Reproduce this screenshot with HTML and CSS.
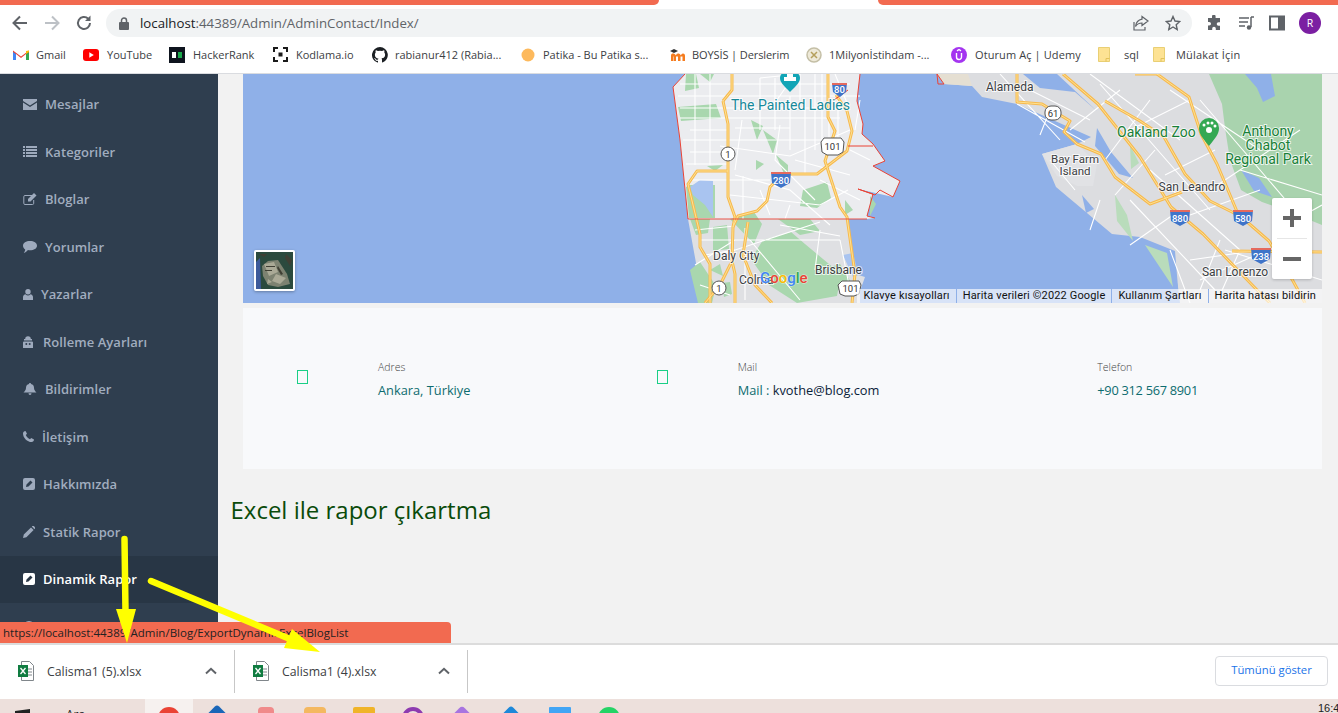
FILE: index.html
```html
<!DOCTYPE html>
<html lang="tr">
<head>
<meta charset="utf-8">
<title>AdminContact</title>
<link rel="stylesheet" href="styles.css">
</head>
<body>
<div class="window">
  <div class="tabstrip"><div class="tab-left"></div><div class="tab-active"></div><div class="tab-right"></div></div>

  <div class="toolbar">
    <svg class="tool" width="18" height="18" viewBox="0 0 18 18"><path d="M16 9H3M9 2.500 2.500 9 9 15.500" fill="none" stroke="#5f6368" stroke-width="2"/></svg>
    <svg class="tool" width="18" height="18" viewBox="0 0 18 18"><path d="M2 9h13M9 2.500 15.500 9 9 15.500" fill="none" stroke="#bdc1c6" stroke-width="2"/></svg>
    <svg class="tool" width="18" height="18" viewBox="0 0 18 18"><path d="M15 9a6 6 0 1 1-1.800-4.300" fill="none" stroke="#5f6368" stroke-width="2"/><path d="M15.500 1.500v5.500H10z" fill="#5f6368"/></svg>
    <div class="omnibox">
      <svg width="10" height="13" viewBox="0 0 10 13"><path d="M2.500 6V3.500a2.500 2.500 0 0 1 5 0V6" fill="none" stroke="#5f6368" stroke-width="1.500"/><rect y="5" width="10" height="8" rx="1" fill="#5f6368"/></svg>
      <span class="url"><span class="url-host">localhost</span>:44389/Admin/AdminContact/Index/</span>
      <span class="omni-spacer"></span>
      <svg width="16" height="16" viewBox="0 0 16 16"><path d="M9 1.500 15 6l-6 4.500V8C6 8 4 9 2.500 11.500 3 7.500 5.500 4.800 9 4.200zM1 7v8h11v-3" fill="none" stroke="#5f6368" stroke-width="1.200"/></svg>
      <svg width="16" height="16" viewBox="0 0 16 16"><path d="m8 1.500 2 4.500 4.800.5-3.600 3.200 1 4.800L8 12l-4.200 2.500 1-4.800L1.200 6.500 6 6z" fill="none" stroke="#5f6368" stroke-width="1.400"/></svg>
    </div>
    <svg class="ext" width="16" height="16" viewBox="0 0 16 16"><path d="M6 1.500a1.800 1.800 0 0 1 3.600 0V3H14v4.200h-1.500a1.800 1.800 0 0 0 0 3.600H14V15H9.800v-1.500a1.800 1.800 0 0 0-3.600 0V15H2v-4.500h1.200a1.800 1.800 0 0 0 0-3.600H2V3h4z" fill="#5f6368"/></svg>
    <svg class="ext" width="16" height="16" viewBox="0 0 16 16"><path d="M1 3h10M1 7h9M1 11h6M13 2v10" fill="none" stroke="#5f6368" stroke-width="1.500"/><circle cx="11" cy="12.500" r="2.200" fill="#5f6368"/><path d="M13 2h3" stroke="#5f6368" stroke-width="1.500"/></svg>
    <svg class="ext" width="16" height="16" viewBox="0 0 16 16"><path d="M1 1.500h14v13H1zM10 1.500v13" fill="none" stroke="#5f6368" stroke-width="2"/><rect x="10" y="2" width="5" height="12" fill="#5f6368"/></svg>
    <div class="avatar">R</div>
  </div>

  <div class="bookmarks">
    <a class="bm bm-gmail"><svg width="16" height="12" viewBox="0 0 16 12"><path d="M0 1.500 8 7.500l8-6V11h-3V5L8 9 3 5v6H0z" fill="#ea4335"/><path d="M0 3v8h3V5z" fill="#4285f4"/><path d="M16 3v8h-3V5z" fill="#34a853"/><path d="M13 2v3l3-2V1.500z" fill="#fbbc04"/></svg>Gmail</a>
    <a class="bm bm-yt"><svg width="16" height="12" viewBox="0 0 16 12"><rect width="16" height="12" rx="3" fill="#f00"/><path d="m6.300 3.300 4.500 2.700-4.500 2.700z" fill="#fff"/></svg>YouTube</a>
    <a class="bm bm-hr"><svg width="16" height="16" viewBox="0 0 16 16"><rect width="16" height="16" fill="#0e141e"/><rect x="3" y="5" width="4" height="6" fill="#fff"/><rect x="9" y="5" width="4" height="6" fill="#1ba94c"/></svg>HackerRank</a>
    <a class="bm bm-kod"><svg width="15" height="15" viewBox="0 0 15 15"><path d="M1 5V1h4M10 1h4v4M14 10v4h-4M5 14H1v-4" fill="none" stroke="#1a1a1a" stroke-width="2"/><rect x="5.500" y="5.500" width="4" height="4" fill="#1a1a1a"/></svg>Kodlama.io</a>
    <a class="bm bm-gh"><svg width="16" height="16" viewBox="0 0 16 16"><path d="M8 0a8 8 0 0 0-2.500 15.600c.4.100.5-.2.500-.4v-1.400c-2.200.5-2.700-1-2.700-1-.4-.9-.9-1.200-.9-1.200-.7-.5.100-.5.100-.5.800.100 1.200.8 1.200.8.700 1.200 1.900.9 2.300.7.100-.5.300-.9.500-1.100-1.800-.2-3.600-.9-3.600-4 0-.9.300-1.600.8-2.100-.1-.2-.4-1 .1-2.100 0 0 .7-.2 2.200.8a7.600 7.600 0 0 1 4 0c1.500-1 2.200-.8 2.200-.8.400 1.100.2 1.900.1 2.100.5.600.8 1.300.8 2.100 0 3.100-1.900 3.700-3.600 3.900.3.300.5.700.5 1.500v2.200c0 .2.100.5.600.4A8 8 0 0 0 8 0z" fill="#1b1f23"/></svg>rabianur412 (Rabia...</a>
    <a class="bm bm-pat"><svg width="14" height="14" viewBox="0 0 14 14"><circle cx="7" cy="7" r="6.500" fill="#fdb95c"/></svg>Patika - Bu Patika s...</a>
    <a class="bm bm-boy"><svg width="16" height="14" viewBox="0 0 16 14"><path d="M1 13V7.500C1 6 2 5.500 3 5.500S5 6 5.500 7 6.500 5.500 8 5.500 10 6 10.500 7 11.500 5.500 13 5.500s2 1 2 2.500v5h-2.500V8.500h-2V13H8V8.500H6V13H3.500V8.500H3V13z" fill="#f57c1f"/><path d="M0 3 4 1l4 2-4 2z" fill="#333"/></svg>BOYSİS | Derslerim</a>
    <a class="bm bm-mil"><svg width="16" height="16" viewBox="0 0 16 16"><circle cx="8" cy="8" r="7" fill="#eee9d8" stroke="#c4bfa6" stroke-width="1.500"/><path d="m5 5 6 6M11 5l-6 6" stroke="#b59f5c" stroke-width="1.500"/></svg>1Milyonİstihdam -...</a>
    <a class="bm bm-ude"><svg width="16" height="16" viewBox="0 0 16 16"><circle cx="8" cy="8" r="8" fill="#a435f0"/><path d="M5.500 6v4a2.500 2.500 0 0 0 5 0V6M6 3.800 8 2.500l2 1.300" fill="none" stroke="#fff" stroke-width="1.400"/></svg>Oturum Aç | Udemy</a>
    <a class="bm bm-sql"><svg width="12" height="15" viewBox="0 0 12 15"><path d="M.5.500h11v14H.5z" fill="#fde293" stroke="#e9cf74"/><path d="M8 14.500v-3h3.500" fill="none" stroke="#e3c25a"/></svg>sql</a>
    <a class="bm bm-mul"><svg width="12" height="15" viewBox="0 0 12 15"><path d="M.5.500h11v14H.5z" fill="#fde293" stroke="#e9cf74"/><path d="M8 14.500v-3h3.500" fill="none" stroke="#e3c25a"/></svg>Mülakat İçin</a>
  </div>

  <div class="main">
    <nav class="sidebar">
      <a class="nav-item"><svg class="ico" width="14" height="11" viewBox="0 0 14 11"><path d="M0 0h14v2L7 6.500 0 2zM0 3.500 7 8l7-4.500V11H0z"/></svg>Mesajlar</a>
      <a class="nav-item"><svg class="ico" width="14" height="11" viewBox="0 0 14 11"><path d="M0 0h2v2H0zM3 0h11v2H3zM0 3h2v2H0zM3 3h11v2H3zM0 6h2v2H0zM3 6h11v2H3zM0 9h2v2H0zM3 9h11v2H3z"/></svg>Kategoriler</a>
      <a class="nav-item"><svg class="ico" width="14" height="12" viewBox="0 0 14 12"><path d="M9 2.500H2a1.200 1.200 0 0 0-1.200 1.200v6.600A1.200 1.200 0 0 0 2 11.500h7.500a1.200 1.200 0 0 0 1.200-1.200V7" fill="none" stroke="#9eaabd"/><path d="M5 6 11 0l2.500 2.500-6 6H5z"/></svg>Bloglar</a>
      <a class="nav-item"><svg class="ico" width="14" height="12" viewBox="0 0 14 12"><path d="M7 0c3.900 0 7 2 7 4.700S10.900 9.300 7 9.300c-.7 0-1.300 0-2-.2C4 10.200 2.500 11.500.800 12c.8-1 1.300-2.200 1.400-3.500C.800 7.600 0 6.200 0 4.700 0 2 3.100 0 7 0z"/></svg>Yorumlar</a>
      <a class="nav-item"><svg class="ico" width="10" height="11" viewBox="0 0 10 11"><circle cx="5" cy="2.700" r="2.700"/><path d="M0 11V8.200C0 6.500 1.200 5.500 2.500 5.200a3.500 3.500 0 0 0 5 0C8.800 5.500 10 6.500 10 8.200V11z"/></svg>Yazarlar</a>
      <a class="nav-item"><svg class="ico" width="12" height="12" viewBox="0 0 12 12"><path d="M2.200 3a2.800 2.800 0 0 1 5.600 0H9v1.500H1V3zM1 5.500h8a1 1 0 0 1 1 1V12H0V6.500a1 1 0 0 1 1-1z"/><circle cx="3.300" cy="8" r="1" fill="#2f3e4f"/><circle cx="6.700" cy="8" r="1" fill="#2f3e4f"/></svg>Rolleme Ayarları</a>
      <a class="nav-item"><svg class="ico" width="14" height="12" viewBox="0 0 14 12"><path d="M7 0c.6 0 1 .4 1 1 2 .4 3 2 3 3.800 0 2 1 3.400 2.500 4.700H.500C2 8.200 3 6.800 3 4.800 3 3 4 1.400 6 1c0-.6.400-1 1-1zM5.500 10.300h3a1.500 1.700 0 0 1-3 0z"/></svg>Bildirimler</a>
      <a class="nav-item"><svg class="ico" width="11" height="11" viewBox="0 0 11 11"><path d="M2.500 0 4 2.800 2.800 4c.6 1.700 2.500 3.600 4.200 4.200L8.200 7 11 8.500c0 1.400-1 2.500-2.400 2.500C4.300 11 0 6.700 0 2.400 0 1 1.100 0 2.500 0z"/></svg>İletişim</a>
      <a class="nav-item"><svg class="ico" width="12" height="12" viewBox="0 0 12 12"><path fill-rule="evenodd" d="M2 0h8a2 2 0 0 1 2 2v8a2 2 0 0 1-2 2H2a2 2 0 0 1-2-2V2a2 2 0 0 1 2-2zm5.500 2.500-4 4L3 9l2.500-.5 4-4z"/></svg>Hakkımızda</a>
      <a class="nav-item"><svg class="ico" width="12" height="12" viewBox="0 0 12 12"><path d="M0 12l.8-3.400L8 1.400 10.600 4 3.400 11.200zM8.800.6 9.400 0a1 1 0 0 1 1.400 0L12 1.200a1 1 0 0 1 0 1.400l-.6.600z"/></svg>Statik Rapor</a>
      <a class="nav-item nav-active"><svg class="ico" width="12" height="12" viewBox="0 0 12 12"><path fill-rule="evenodd" d="M2 0h8a2 2 0 0 1 2 2v8a2 2 0 0 1-2 2H2a2 2 0 0 1-2-2V2a2 2 0 0 1 2-2zm5.500 2.500-4 4L3 9l2.500-.5 4-4z"/></svg>Dinamik Rapor</a>
      <a class="nav-item"><svg class="ico" width="12" height="12" viewBox="0 0 12 12"><circle cx="6" cy="6" r="6"/></svg>Ayarlar</a>
    </nav>

    <section class="content">
      <div class="map">
        <svg class="map-svg" width="1079" height="229" viewBox="243 74 1079 229">
          <defs>
            <g id="hwp">
              <path d="M723 101 728 124V197L735 217 733 227 732 261 735 274 735 303"/>
              <path d="M780 177 770 187 767 201 757 211 738 216 733 227"/>
              <path d="M828 74 828 117 835 131 825 161 840 207 847 217 855 274 852 303"/>
              <path d="M790 174H817L847 151 852 131 847 111 836 95"/>
              <path d="M728 171H697L688 184 700 234 700 247 710 264 710 303"/>
              <path d="M748 222 743 255 755 285 772 303"/>
              <path d="M732 261 720 285 705 303"/>
              <path d="M732 74V90L723 101"/>
              <path d="M1063 74 1098 104 1140 157 1171 207 1203 234 1258 291 1270 303"/>
              <path d="M1157 74 1189 97 1201 134 1217 164 1238 214 1269 241 1293 281 1305 303"/>
              <path d="M1232 251 1322 252"/>
              <path d="M1017 74V102L1042 104 1070 121 1064 132 1077 144 1101 154 1115 177 1150 204 1182 192"/>
              <path d="M1105 101 1140 121 1164 137 1185 174 1210 201 1240 216"/>
              <path d="M1135 74H1160"/>
            </g>
          </defs>
          <rect x="243" y="74" width="1079" height="229" fill="#8fb0e8"/>
          <!-- peninsula -->
          <path d="M685 74 673 87 680 140 688 219 698 274 700 303H860V291L865 277 855 274 847 219H688z" fill="#dfe0e3"/>
          <path d="M685 74 673 87 680 140 688 219H867L875 218 867 216 873 194 858 189 893 197 900 181 873 166 885 161 873 144 862 134 863 124 857 101 860 74z" fill="#ebecef"/>
          <!-- east bay -->
          <path d="M937 74 944 84 972 86 982 97 1017 104 1091 137 1077 144 1042 154 1056 187 1112 234 1140 237 1175 251 1178 287 1180 303H1322V74z" fill="#dcdde0"/>
          <path d="M937 74 944 84 972 86 968 74z" fill="#e5dfd2"/>
          <path d="M1023 74 1040 88 1075 92 1098 112 1057 74zM1097 128l14 24 22 26-14-4-24-28zM1157 282l15-20 6 25-4 16h-17z" fill="#8fb0e8"/>
          <path d="M1209 74 1222 104 1225 128 1230 160 1241 190 1262 202 1290 212 1322 225V74z" fill="#a9d3ae"/>
          <path d="M1245 74l12 14 6 14 12-6-4-22zM1241 170l18 8 13 19-18-6z" fill="#8fb0e8"/>
          <path d="M1130 145l9 18-8 6zM1115 195l12 20 6 26-16-20zM1145 245l22 8 6 34z" fill="#b9dcbb"/>
          <path d="M1042 154l35-10 20 20-4 22-16 0-20-10z" fill="#e1e2e5"/>
          <path d="M1082 195l12 14-8 4z" fill="#8fb0e8"/>
          <!-- parks -->
          <path d="M678 107l38-3 5 14-40 3zM686 74l10 0 3 14-14 3zM700 74l14 0-4 8zM751 120l12 6-6 14zM763 130l14 10-4 14zM756 160l8 4-8 6zM776 155l12 10 0 18zM707 166l16-1-8 6zM686 187l4-2 25 0 0 33-26 0zM803 190l24-8 4 16-14 10-17-2zM845 200l8 10-8 5zM870 196l6 8-6 12zM690 219l20 0-2 14-12 2zM713 227l14-2 2 24-16 2zM730 219l24-7 8 12-8 20zM690 270l10-8 16 24-4 17h-14zM710 270l10-6 3 12zM763 240l28-8 14 12 36 30-4 22-40 7-28-18-18-26zM778 219l32 0 10 12-20 4zM722 283l8-1 2 12-8 3zM820 270l20-6 12 20-18 8z" fill="#a9d7ae"/>
          <path d="M690 187l10-7 13 1 0 36-8-12-12-10zM843 255l10-2 6 22-6 2z" fill="#a9c4f0"/>
          <!-- white streets -->
          <g class="streets">
            <path d="M678 96H860M680 118H840M683 140H830M720 146 790 156 850 130M686 164H728M690 180H770M730 195 820 205 848 190M770 110 795 74M835 74 850 110M780 125 775 160 815 200M735 175 790 190 830 225M700 240H840M720 255 820 222M695 265 735 240M750 240 800 300M820 230 815 270M800 74V100M815 74V150M822 74V150M829 74V150M838 85V150"/>
            <path d="M680 84H850M680 108H850M695 74V165M710 74V165M760 78V130M775 78V130M790 96V150M742 120 735 170M743 176V219M690 130H728M735 128H790M805 100V175M690 152H725M795 160 850 175M760 190 770 215M790 205 785 219M820 180 860 200M695 230 735 226M705 255 735 250M745 228 745 300M780 225 840 236M840 240 850 290M700 285 730 295M760 78 800 74M850 150 870 160M855 130 860 100"/>
            <path d="M1000 74 1060 140M1017 104 1085 142M1100 84 1210 210M1150 100 1105 160M1150 170 1240 250M1170 90 1260 150M1180 210 1130 245M1210 190 1300 130M1225 250 1322 280M1200 100 1290 205M1130 200 1215 290M1240 170 1322 195M1170 250 1190 303M1050 160 1075 190M1100 200 1090 230"/>
            <path d="M1030 90 1090 120M1090 74 1180 140M1120 90 1070 130M1130 130 1190 100M1155 150 1115 195M1165 175 1215 150M1190 215 1260 190M1220 240 1200 290M1240 250 1220 295M1190 260 1260 250M1200 280 1290 240M1295 220 1322 205M1050 110 1040 135"/>
          </g>
          <!-- highways -->
          <use class="hw" href="#hwp"/>
          <use class="hw-in" href="#hwp"/>
          <!-- red boundary -->
          <path class="bound" d="M685 74 673 87 680 140 688 219"/>
          <path class="bound" d="M860 74 857 101 863 124 862 134 873 144 885 161 873 166 900 181 893 197 880 190 875 195 858 189 873 194 867 216 875 218"/>
          <path class="bound" d="M937 74 944 84 938 84z"/>
          <path class="bound" d="M848 146H873"/>
          <path class="bound" d="M834 100 848 90"/>
          <path d="M688 219H867" stroke="#ea4335" stroke-width="2" opacity=".45" fill="none"/>
          <!-- shields -->
          <g class="ushield"><circle cx="728" cy="154" r="7"/><circle cx="719" cy="288" r="7"/><rect x="1045" y="106" width="16" height="14" rx="6"/></g>
          <text class="sh-t" x="728" y="158">1</text>
          <text class="sh-t" x="719" y="292">1</text>
          <text class="sh-t" x="1053" y="117">61</text>
          <g class="usroad"><path d="M824 138h17l3 4-1 10-5 3h-11l-5-3-1-10z"/><path d="M842 281h17l2 4-2 9-5 2h-9l-5-2-2-9z"/></g>
          <text class="sh-t" x="832.500" y="150">101</text>
          <text class="sh-t" x="850.500" y="292">101</text>
          <g class="inter">
            <path d="M771 172h20l-1 11-9 5-9-5z"/><path d="M832 83h15l-1 9-6 5-7-5z"/><path d="M1170 210h20l-1 11-9 5-9-5z"/><path d="M1233 210h20l-1 11-9 5-9-5z"/><path d="M1251 248h20l-1 11-9 5-9-5z"/>
          </g>
          <path d="M771 172h20v2h-20zM832 83h15v2h-15zM1170 210h20v2h-20zM1233 210h20v2h-20zM1251 248h20v2h-20z" fill="#e46a5e"/>
          <text class="in-t" x="781" y="184">280</text>
          <text class="in-t" x="839.500" y="93">80</text>
          <text class="in-t" x="1180" y="222">880</text>
          <text class="in-t" x="1243" y="222">580</text>
          <text class="in-t" x="1261" y="260">238</text>
          <!-- pins -->
          <path d="M790 92c-7-7-10-10-10-14 0-2 1-4 2-4h16c1 0 2 2 2 4 0 4-3 7-10 14z" fill="#12a5b6"/>
          <path d="M787 74h6v3h3v4h-12v-4h3z" fill="#fff"/>
          <path d="M1209 146c-7-9-10-12-10-18a10 10 0 0 1 20 0c0 6-3 9-10 18z" fill="#34a853"/>
          <circle cx="1209" cy="130" r="3" fill="#fff"/><circle cx="1204" cy="125" r="1.500" fill="#fff"/><circle cx="1208" cy="123" r="1.500" fill="#fff"/><circle cx="1212" cy="123" r="1.500" fill="#fff"/><circle cx="1215" cy="126" r="1.500" fill="#fff"/>
          <!-- labels -->
          <text class="lb lb-teal" x="731" y="110">The Painted Ladies</text>
          <text class="lb lb-dark" x="986" y="91">Alameda</text>
          <text class="lb lb-green" x="1117" y="137">Oakland Zoo</text>
          <text class="lb lb-green lb-mid" x="1268" y="136">Anthony</text>
          <text class="lb lb-green lb-mid" x="1268" y="150">Chabot</text>
          <text class="lb lb-green lb-mid" x="1268" y="164">Regional Park</text>
          <text class="lb lb-dark lb-mid lb-sm" x="1075" y="163">Bay Farm</text>
          <text class="lb lb-dark lb-mid lb-sm" x="1075" y="175">Island</text>
          <text class="lb lb-dark lb-mid" x="1192" y="191">San Leandro</text>
          <text class="lb lb-dark lb-mid" x="1235" y="276">San Lorenzo</text>
          <text class="lb lb-dark" x="713" y="260">Daly City</text>
          <text class="lb lb-dark" x="739" y="284">Colma</text>
          <text class="lb lb-dark" x="815" y="274">Brisbane</text>
          <text class="google" x="760" y="283"><tspan fill="#4285f4">G</tspan><tspan fill="#ea4335">o</tspan><tspan fill="#fbbc04">o</tspan><tspan fill="#4285f4">g</tspan><tspan fill="#34a853">l</tspan><tspan fill="#ea4335">e</tspan></text>
        </svg>
        <div class="sat"><svg width="37" height="37" viewBox="0 0 37 37"><rect width="37" height="37" fill="#2b4a3e"/><path d="M0 10 4 6 5 37H0z" fill="#3d5a9a"/><path d="M6 14 12 9 22 8 31 22 34 32 22 35 12 33 7 24z" fill="#7d8271"/><path d="M8 12l10-2 4 10-9 4zM20 22l10 4-6 6-8-3zM12 27l4 3-5 2z" fill="#aaa996"/><path d="M10 14h9v1h-9zM9 18h7v1H9zM22 14l5 8-2 1-4-7zM30 2l6 6-2 6-5-8zM3 2h8l-3 3z" fill="#3f3f34"/></svg></div>
        <div class="zoom"><div class="zoom-btn">
          <svg width="18" height="18" viewBox="0 0 18 18"><path d="M7 0h4v7h7v4h-7v7H7v-7H0V7h7z" fill="#666"/></svg></div>
          <div class="zoom-sep"></div>
          <div class="zoom-btn"><svg width="18" height="4" viewBox="0 0 18 4"><rect width="18" height="4" fill="#666"/></svg></div>
        </div>
        <div class="attrib"><span>Klavye kısayolları</span><span>Harita verileri ©2022 Google</span><span>Kullanım Şartları</span><span>Harita hatası bildirin</span></div>
      </div>

      <div class="contact">
        <div class="c-col">
          <div class="c-icon"><span class="tofu"></span></div>
          <div class="c-text"><div class="c-label">Adres</div><div class="c-value">Ankara, Türkiye</div></div>
        </div>
        <div class="c-col">
          <div class="c-icon"><span class="tofu"></span></div>
          <div class="c-text"><div class="c-label">Mail</div><div class="c-value">Mail : <span class="c-mail">kvothe@blog.com</span></div></div>
        </div>
        <div class="c-col">
          <div class="c-icon"></div>
          <div class="c-text"><div class="c-label">Telefon</div><div class="c-value c-tel">+90 312 567 8901</div></div>
        </div>
      </div>

      <h2 class="report">Excel ile rapor çıkartma</h2>
    </section>
    <div class="status">https://localhost:44389/Admin/Blog/ExportDynamicExcelBlogList</div>
  </div>

  <div class="downloads">
    <div class="dl">
      <svg class="xl" width="16" height="20" viewBox="0 0 16 20"><path d="M3.500.500h8l4 4v15h-12z" fill="#fff" stroke="#80868b"/><path d="M10 11h4M10 8h4M10 14h4" stroke="#80868b"/><rect y="4" width="10" height="12" fill="#107c41"/><path d="m2.500 7 5 6m0-6-5 6" stroke="#fff" stroke-width="1.300"/></svg>
      <span class="dl-name">Calisma1 (5).xlsx</span>
      <svg class="chev" width="12" height="8" viewBox="0 0 12 8"><path d="M1 6.500 6 1.800l5 4.700" fill="none" stroke="#5f6368" stroke-width="2"/></svg>
    </div>
    <div class="dl">
      <svg class="xl" width="16" height="20" viewBox="0 0 16 20"><path d="M3.500.500h8l4 4v15h-12z" fill="#fff" stroke="#80868b"/><path d="M10 11h4M10 8h4M10 14h4" stroke="#80868b"/><rect y="4" width="10" height="12" fill="#107c41"/><path d="m2.500 7 5 6m0-6-5 6" stroke="#fff" stroke-width="1.300"/></svg>
      <span class="dl-name">Calisma1 (4).xlsx</span>
      <svg class="chev" width="12" height="8" viewBox="0 0 12 8"><path d="M1 6.500 6 1.800l5 4.700" fill="none" stroke="#5f6368" stroke-width="2"/></svg>
    </div>
    <span class="dl-spacer"></span>
    <button class="showall">Tümünü göster</button>
  </div>

  <div class="taskbar">
    <svg class="tb-win" width="16" height="4" viewBox="0 0 16 4"><path d="M1 2 16 0V4H1z" fill="#222"/></svg>
    <span class="tb-search">Ara</span>
    <div class="tb-active"><span class="dot dot-red"></span></div>
    <div class="tb-icons">
      <span class="dot dot-blue"></span><span class="dot dot-pink"></span><span class="dot dot-amber"></span><span class="dot dot-folder"></span><span class="dot dot-ring"></span><span class="dot dot-vs"></span><span class="dot dot-azure"></span><span class="dot dot-sky"></span><span class="dot dot-green"></span>
    </div>
    <span class="tb-spacer"></span>
    <span class="tb-clock">16:47</span>
  </div>

  <svg class="arrows" width="1338" height="713" viewBox="0 0 1338 713">
    <path d="M124.500 539 125.500 612" stroke="#ffff00" stroke-width="6.500" stroke-linecap="round" fill="none"/>
    <path d="M116 609H136L127 643z" fill="#ffff00"/>
    <path d="M151 581 290 639" stroke="#ffff00" stroke-width="6.500" stroke-linecap="round" fill="none"/>
    <path d="M292 629 284 648 320 652z" fill="#ffff00"/>
  </svg>
</div>
</body>
</html>
```
FILE: styles.css
```css
* { box-sizing: border-box; }
html, body { margin: 0; padding: 0; }
body { font-family: "Open Sans", "Liberation Sans", sans-serif; background: #fff; }
.window { position: relative; width: 1338px; height: 713px; overflow: hidden; display: flex; flex-direction: column; }

.tabstrip { display: flex; height: 5px; flex: none; background: #fff; }
.tab-left { width: 659px; background: #f26a50; border-bottom-right-radius: 5px; }
.tab-active { width: 219px; }
.tab-right { flex: 1; background: #f26a50; border-bottom-left-radius: 5px; }

.toolbar { display: flex; align-items: center; height: 32px; flex: none; padding: 4px 17px 0 11px; background: #fff; }
.tool { margin-right: 14px; flex: none; }
.tool:nth-child(3) { margin-right: 13px; }
.omnibox { display: flex; align-items: center; width: 1086px; height: 28px; padding: 0 11px 0 13px; background: #f1f3f4; border-radius: 14px; gap: 11px; flex: none; }
.omnibox svg:last-child { margin-left: 5px; }
.url { font-size: 13.250px; color: #5f6368; white-space: nowrap; }
.url-host { color: #202124; }
.omni-spacer { flex: 1; }
.ext { margin-left: 15.500px; flex: none; }
.omnibox + .ext { margin-left: 14px; }
.avatar { width: 22px; height: 22px; margin-left: 14px; border-radius: 50%; background: #7b1fa2; color: #fff; font-size: 10.500px; display: flex; align-items: center; justify-content: center; flex: none; }

.bookmarks { position: relative; display: flex; align-items: center; height: 37px; flex: none; background: #fff; border-bottom: 1px solid #dadce0; padding-bottom: 1px; font-size: 11px; color: #3c4043; white-space: nowrap; }
.bm { display: flex; align-items: center; flex: none; color: #3c4043; }
.bm svg { flex: none; margin-right: 7px; }
.bm-gmail { margin-left: 13px; width: 70px; }
.bm-yt { width: 86px; }
.bm-yt svg { margin-right: 8px; }
.bm-hr { width: 104px; }
.bm-hr svg { margin-right: 8px; }
.bm-kod { width: 99px; }
.bm-kod svg { margin-right: 8px; }
.bm-gh { width: 149px; }
.bm-pat { width: 149px; }
.bm-pat svg { margin-right: 8px; }
.bm-boy { width: 136px; letter-spacing: -.1px; }
.bm-boy svg { margin-right: 6px; }
.bm-mil { width: 145px; }
.bm-ude { width: 147px; letter-spacing: .1px; }
.bm-ude svg { margin-right: 8px; }
.bm-sql { width: 55px; }
.bm-sql svg { margin-right: 14px; }
.bm-mul { width: 100px; letter-spacing: .2px; }
.bm-mul svg { margin-right: 11px; }

.main { position: relative; flex: 1; display: flex; background: #f2f2f2; min-height: 0; }
.sidebar { width: 218px; flex: none; background: #2f3e4f; padding-top: 6.400px; overflow: hidden; }
.nav-item { display: flex; align-items: center; height: 47.530px; padding-left: 23px; gap: 8px; font-size: 13px; font-weight: 600; color: #a1adbf; letter-spacing: .05px; white-space: nowrap; }
.ico { fill: #9eaabd; flex: none; }
.nav-active { background: #283645; color: #fff; }
.nav-active .ico { fill: #fff; }

.content { flex: 1; min-width: 0; padding: 0 16px 0 12px; }
.map { position: relative; width: 1079px; height: 229px; margin-left: 13px; overflow: hidden; }
.map-svg { display: block; }
.streets path { fill: none; stroke: #fff; stroke-width: 1.100; }
.hw { fill: none; stroke: #f7b94e; stroke-width: 3; stroke-linejoin: round; }
.hw-in { fill: none; stroke: #fde293; stroke-width: 1; stroke-linejoin: round; }
.bound { fill: none; stroke: #ea4335; stroke-width: 1; }
.ushield circle, .ushield rect { fill: #fff; stroke: #555; stroke-width: 1; }
.usroad path { fill: #fff; stroke: #555; stroke-width: 1; }
.inter path { fill: #3f74c9; }
.sh-t { font: 9.500px Roboto, sans-serif; fill: #333; text-anchor: middle; }
.in-t { font: 500 9.500px Roboto, sans-serif; fill: #fff; text-anchor: middle; }
.lb { font-family: Roboto, sans-serif; font-size: 12px; paint-order: stroke; stroke: rgba(255,255,255,.75); stroke-width: 2px; }
.lb-sm { font-size: 11.500px; }
.lb-mid { text-anchor: middle; }
.lb-teal { fill: #16899a; font-size: 14px; }
.lb-dark { fill: #3c4043; }
.lb-green { fill: #188038; font-size: 14px; }
.google { font: 500 15px Roboto, sans-serif; paint-order: stroke; stroke: rgba(255,255,255,.6); stroke-width: 1px; }
.sat { position: absolute; left: 11px; top: 176px; width: 41px; height: 41px; border: 2px solid #fff; border-radius: 2px; box-shadow: 0 1px 3px rgba(0,0,0,.3); overflow: hidden; }
.sat svg { display: block; }
.zoom { position: absolute; right: 10px; top: 124px; width: 40px; height: 81px; background: #fff; border-radius: 2px; box-shadow: 0 1px 3px rgba(0,0,0,.2); display: flex; flex-direction: column; }
.zoom-btn { flex: 1; display: flex; align-items: center; justify-content: center; }
.zoom-sep { height: 1px; margin: 0 5px; background: #e6e6e6; }
.attrib { position: absolute; right: 0; bottom: 0; height: 14px; display: flex; font-family: Roboto, sans-serif; font-size: 11px; letter-spacing: .15px; line-height: 14px; color: #111; }
.attrib span { padding: 0 6px; background: rgba(255,255,255,.65); border-left: 1px solid #8fb0e8; white-space: nowrap; }
.attrib span:first-child { border-left: 0; }

.contact { display: grid; grid-template-columns: repeat(3, 1fr); width: 1079px; height: 161px; margin: 5px 0 0 13px; background: #f8f9fb; }
.c-col { display: flex; padding: 51px 0 0 54px; }
.c-icon { width: 81px; flex: none; padding-top: 11px; }
.tofu { display: block; width: 11px; height: 14px; border: 1px solid #19cf86; }
.c-label { font-size: 10.500px; font-weight: 300; line-height: 16px; color: #444; }
.c-value { margin-top: 6px; font-size: 12.800px; line-height: 18px; color: #0d6c6f; }
.c-tel { letter-spacing: -.28px; }
.c-mail { color: #0b2239; }

.report { margin: 24px 0 0 .5px; font-size: 24px; font-weight: 400; line-height: 34px; color: #0a4b0a; }

.status { position: absolute; left: 0; bottom: 0; width: 451px; height: 21px; padding: 2px 0 0 3px; background: #f26a50; border-top-right-radius: 4px; font-size: 11.500px; line-height: 18px; color: #222; white-space: nowrap; }

.downloads { display: flex; align-items: center; height: 56px; flex: none; background: #fff; border-top: 2px solid #dcdcdc; padding: 0 10px 2px 0; }
.dl { display: flex; align-items: center; width: 235px; height: 43px; padding-left: 18px; border-right: 1px solid #c7c7c7; flex: none; }
.dl + .dl { width: 233px; }
.xl { margin-right: 13px; flex: none; }
.dl-name { font-size: 12.300px; color: #3c4043; flex: 1; white-space: nowrap; }
.chev { margin-right: 17px; flex: none; }
.dl-spacer { flex: 1; }
.showall { width: 113px; height: 30px; background: #fff; border: 1px solid #dadce0; border-radius: 4px; font: 11.300px "Open Sans", sans-serif; color: #1a73e8; padding: 0 0 3px; }

.taskbar { display: flex; align-items: flex-start; height: 14px; flex: none; background: #ede0dc; overflow: hidden; }
.tb-win { margin: 10px 0 0 14px; flex: none; }
.tb-search { margin: 8px 0 0 36px; width: 79px; font-size: 12px; color: #222; line-height: 16px; flex: none; }
.tb-active { width: 48px; height: 14px; background: #f6f1ef; padding: 8px 0 0 13px; flex: none; }
.tb-icons { display: flex; gap: 27px; padding: 8px 0 0 13px; }
.dot { display: block; width: 22px; height: 22px; flex: none; border-radius: 50%; }
.dot-red { background: #ea4335; }
.dot-blue { background: #1a66b8; border-radius: 3px; transform: rotate(45deg); margin-top: 2px; }
.dot-pink { background: #f08a8a; width: 16px; margin: 0 3px; border-radius: 4px; }
.dot-amber { background: #f4b860; border-radius: 4px; }
.dot-folder { background: #f0b429; border-radius: 2px; }
.dot-ring { background: transparent; border: 4px solid #8e3bb0; }
.dot-vs { background: #a874e0; border-radius: 4px; transform: rotate(45deg); margin-top: 3px; }
.dot-azure { background: #1e88d9; border-radius: 3px; transform: rotate(45deg); margin-top: 3px; }
.dot-sky { background: #42a5f5; border-radius: 1px; }
.dot-green { background: #25d366; }
.tb-spacer { flex: 1; }
.tb-clock { width: 20px; overflow: hidden; font-size: 11px; line-height: 14px; margin-top: 2px; color: #222; font-family: "Liberation Sans", sans-serif; white-space: nowrap; }

.arrows { position: absolute; left: 0; top: 0; pointer-events: none; }
```
